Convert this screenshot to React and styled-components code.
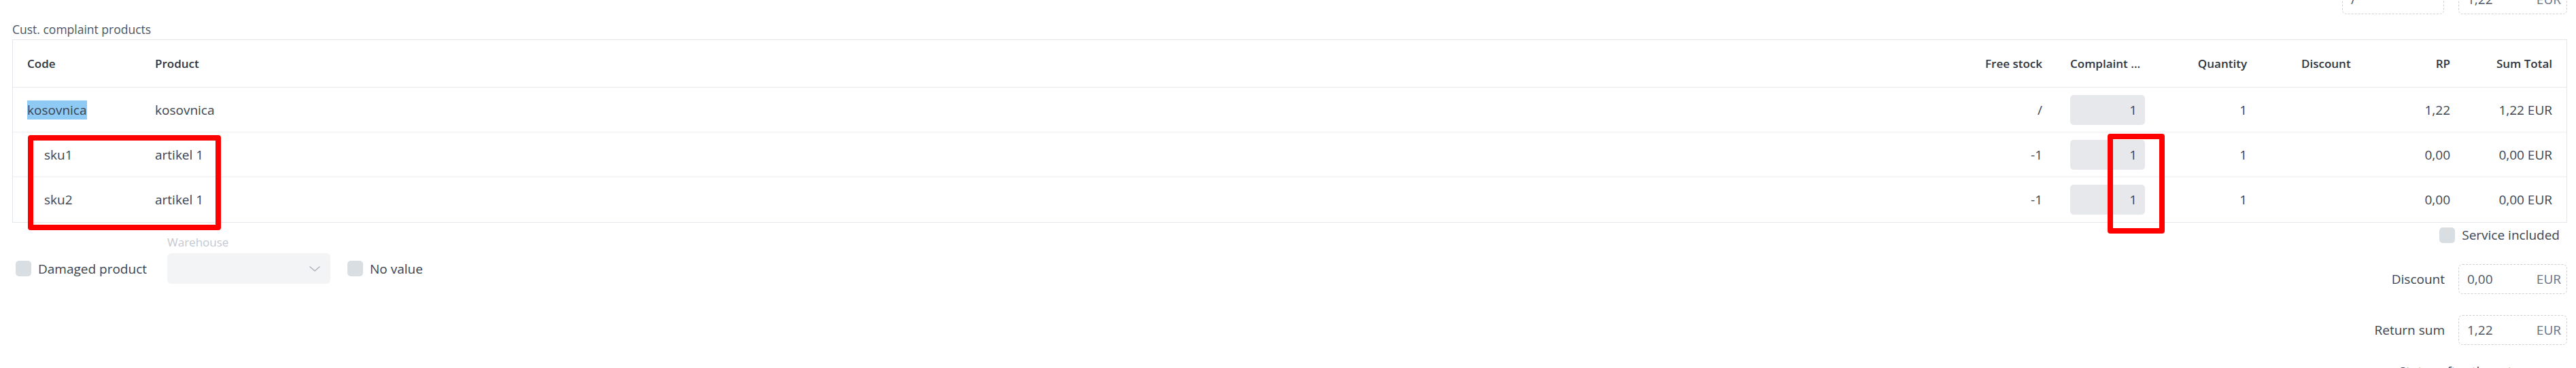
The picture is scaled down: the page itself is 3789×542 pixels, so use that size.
import React from "react";
import styled, { createGlobalStyle } from "styled-components";

const GlobalStyle = createGlobalStyle`
    html, body {
        margin: 0;
        padding: 0;
        background: #ffffff;
        overflow: hidden;
    }
    body {
        font-family: "Open Sans", "Noto Sans", sans-serif;
        color: #374151;
    }
`

const products = [
    { code: "kosovnica", name: "kosovnica", stock: "/", complaint: "1", qty: "1", rp: "1,22", total: "1,22 EUR", selected: true },
    { code: "sku1", name: "artikel 1", stock: "-1", complaint: "1", qty: "1", rp: "0,00", total: "0,00 EUR", child: true },
    { code: "sku2", name: "artikel 1", stock: "-1", complaint: "1", qty: "1", rp: "0,00", total: "0,00 EUR", child: true },
];

function App() {
    return (
        <Page>
            <GlobalStyle />

            <PrevRow>
                <MoneyBox width="150px">
                    <BoxValue>/</BoxValue>
                </MoneyBox>
                <MoneyBox width="160px">
                    <BoxValue>1,22</BoxValue>
                    <Currency>EUR</Currency>
                </MoneyBox>
            </PrevRow>

            <Title>Cust. complaint products</Title>

            <Table>
                <HeadRow>
                    <HeadCell>Code</HeadCell>
                    <HeadCell>Product</HeadCell>
                    <HeadCell align="right">Free stock</HeadCell>
                    <HeadCell pad="41px">Complaint ...</HeadCell>
                    <HeadCell align="right">Quantity</HeadCell>
                    <HeadCell pad="80px">Discount</HeadCell>
                    <HeadCell align="right">RP</HeadCell>
                    <HeadCell align="right">Sum Total</HeadCell>
                </HeadRow>
                {products.map((p) => (
                    <BodyRow key={p.code}>
                        <Cell pad={p.child ? "25px" : "0"}>
                            {p.selected ? <Selected>{p.code}</Selected> : p.code}
                        </Cell>
                        <Cell>{p.name}</Cell>
                        <Cell align="right">{p.stock}</Cell>
                        <Cell pad="41px">
                            <QtyInput>{p.complaint}</QtyInput>
                        </Cell>
                        <Cell align="right">{p.qty}</Cell>
                        <Cell pad="80px"></Cell>
                        <Cell align="right">{p.rp}</Cell>
                        <Cell align="right">{p.total}</Cell>
                    </BodyRow>
                ))}
            </Table>

            <Footer>
                <Options>
                    <CheckItem>
                        <Check />
                        <CheckLabel>Damaged product</CheckLabel>
                    </CheckItem>
                    <Field>
                        <FieldLabel>Warehouse</FieldLabel>
                        <Select>
                            <svg width="16" height="8" viewBox="0 0 16 8" fill="none">
                                <path d="M1 1l7 6 7-6" stroke="#aeb3ba" strokeWidth="1.6" strokeLinecap="round" strokeLinejoin="round" />
                            </svg>
                        </Select>
                    </Field>
                    <CheckItem>
                        <Check />
                        <CheckLabel>No value</CheckLabel>
                    </CheckItem>
                </Options>

                <Summary>
                    <ServiceRow>
                        <Check />
                        <CheckLabel>Service included</CheckLabel>
                    </ServiceRow>
                    <SumRow>
                        <SumLabel>Discount</SumLabel>
                        <MoneyBox width="160px">
                            <BoxValue>0,00</BoxValue>
                            <Currency>EUR</Currency>
                        </MoneyBox>
                    </SumRow>
                    <SumRow gap="31px">
                        <SumLabel>Return sum</SumLabel>
                        <MoneyBox width="160px">
                            <BoxValue>1,22</BoxValue>
                            <Currency>EUR</Currency>
                        </MoneyBox>
                    </SumRow>
                    <StatusLabel>Status after the return</StatusLabel>
                </Summary>
            </Footer>

            {/* review annotations */}
            <Marker style={{ left: 41, top: 199, width: 284, height: 140 }} />
            <Marker style={{ left: 3100, top: 197, width: 84, height: 147 }} />
        </Page>
    );
}

export default App;

const Page = styled.div`
    position: relative;
    width: 3789px;
    height: 542px;
    padding: 0 13px 0 18px;
    box-sizing: border-box;
    overflow: hidden;
`

const PrevRow = styled.div`
    display: flex;
    justify-content: flex-end;
    gap: 21px;
    margin-top: -23px;
`

const MoneyBox = styled.div`
    width: ${(p) => p.width};
    height: 44px;
    box-sizing: border-box;
    border: 1px dashed #cdd1d6;
    border-radius: 6px;
    display: flex;
    align-items: center;
    justify-content: space-between;
    padding: 0 8px 0 12px;
    font-size: 19px;
`

const BoxValue = styled.span`
    color: #4b5563;
`

const Currency = styled.span`
    color: #6b7280;
`

const Title = styled.div`
    font-size: 17.5px;
    line-height: 22px;
    color: #4b5563;
    margin-top: 11px;
    height: 26px;
`

const Table = styled.div`
    border: 1px solid #e3e6ea;
    padding: 0 21px;
`

const rowGrid = `
    display: grid;
    grid-template-columns: 188px 1fr 120px 151px 150px 185px 114px 150px;
    align-items: center;
    margin: 0 -21px;
    padding: 0 21px;
`

const HeadRow = styled.div`
    ${rowGrid}
    height: 69px;
    border-bottom: 1px solid #e8eaed;
`

const BodyRow = styled.div`
    ${rowGrid}
    height: 65px;
    border-bottom: 1px solid #eceef1;

    &:last-child {
        border-bottom: none;
        height: 66px;
    }
`

const HeadCell = styled.div`
    font-size: 17px;
    font-weight: 600;
    color: #2f3642;
    text-align: ${(p) => p.align || "left"};
    padding-left: ${(p) => p.pad || "0"};
    white-space: nowrap;
`

const Cell = styled.div`
    font-size: 19px;
    color: #3b4350;
    text-align: ${(p) => p.align || "left"};
    padding-left: ${(p) => p.pad || "0"};
    white-space: nowrap;
`

const Selected = styled.span`
    background: #8fcaf5;
    padding: 1px 0;
`

const QtyInput = styled.div`
    width: 110px;
    height: 44px;
    box-sizing: border-box;
    background: #e6e8ec;
    border-radius: 5px;
    display: flex;
    align-items: center;
    justify-content: flex-end;
    padding-right: 12px;
`

const Footer = styled.div`
    display: flex;
    justify-content: space-between;
    align-items: flex-start;
`

const Options = styled.div`
    display: flex;
    align-items: flex-end;
    margin-top: 19px;
    padding-left: 5px;
`

const CheckItem = styled.div`
    display: flex;
    align-items: center;
    gap: 10px;
    height: 45px;
    margin-right: 30px;

    &:last-child {
        margin-right: 0;
    }
`

const Check = styled.span`
    width: 23px;
    height: 23px;
    border-radius: 5px;
    background: #d9dee3;
    flex-shrink: 0;
`

const CheckLabel = styled.span`
    font-size: 19px;
    color: #3b4350;
    white-space: nowrap;
`

const Field = styled.div`
    display: flex;
    flex-direction: column;
    gap: 6px;
    margin-right: 25px;
`

const FieldLabel = styled.span`
    font-size: 17px;
    line-height: 20px;
    color: #c3c8cf;
`

const Select = styled.div`
    width: 240px;
    height: 45px;
    box-sizing: border-box;
    background: #f3f4f6;
    border-radius: 6px;
    display: flex;
    align-items: center;
    justify-content: flex-end;
    padding-right: 15px;
`

const Summary = styled.div`
    display: flex;
    flex-direction: column;
    align-items: flex-end;
`

const ServiceRow = styled.div`
    display: flex;
    align-items: center;
    gap: 10px;
    height: 22px;
    margin-top: 7px;
    margin-right: 11px;
`

const SumRow = styled.div`
    display: flex;
    align-items: center;
    gap: 20px;
    margin-top: ${(p) => p.gap || "32px"};
`

const SumLabel = styled.span`
    font-size: 19px;
    color: #3b4350;
`

const StatusLabel = styled.span`
    font-size: 19px;
    line-height: 24px;
    color: #3b4350;
    margin-top: 27px;
    margin-right: 50px;
    white-space: nowrap;
`

const Marker = styled.div`
    position: absolute;
    box-sizing: border-box;
    border: 8px solid #ff0000;
    border-radius: 4px;
    pointer-events: none;
`
